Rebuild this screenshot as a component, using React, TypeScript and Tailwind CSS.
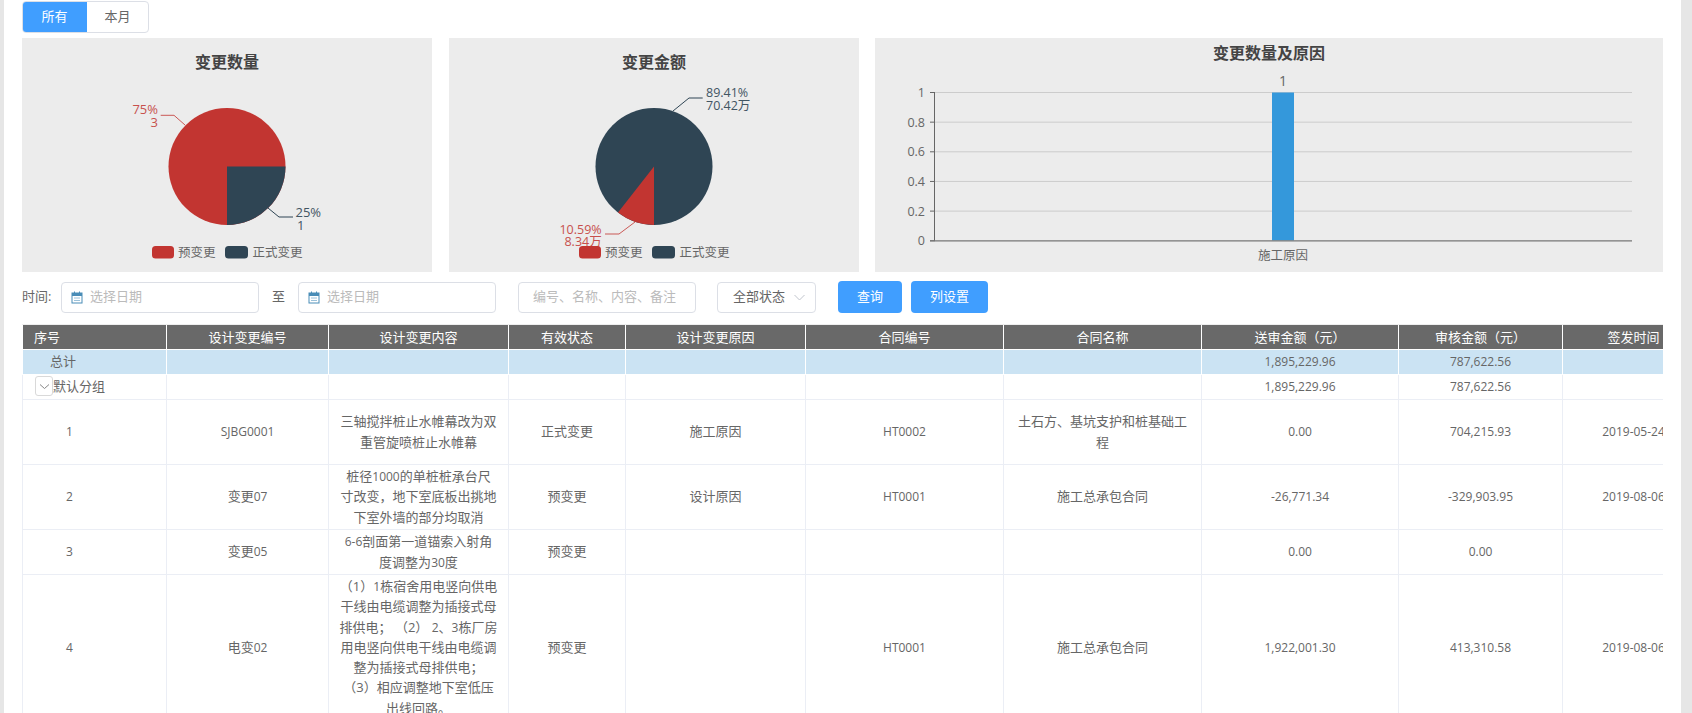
import React from "react";

const RED = "#c23531";
const DARK = "#2f4554";

function L({children}: {children: React.ReactNode}) {
	return <span className="text-xs">{children}</span>;
}

function Legend() {
	return (
		<g fontSize={12.5} fill="#666">
			<rect x={130} y={208} width={22} height={12.5} rx={3.5} fill={RED} />
			<text x={156} y={214.5} dominantBaseline="central">预变更</text>
			<rect x={203} y={208} width={23} height={12.5} rx={3.5} fill={DARK} />
			<text x={230.5} y={214.5} dominantBaseline="central">正式变更</text>
		</g>
	);
}

function ChartTitle({x, y, children}: {x: number; y: number; children: string}) {
	return (
		<text x={x} y={y} textAnchor="middle" dominantBaseline="central" fontSize={16} fontWeight={700} fill="#444">
			{children}
		</text>
	);
}

function PieCountChart() {
	return (
		<svg width={410} height={234} className="block">
			<ChartTitle x={205} y={23.5}>变更数量</ChartTitle>
			<circle cx={205} cy={128.5} r={58.5} fill={RED} />
			<path d="M205 128.5 L263.5 128.5 A58.5 58.5 0 0 1 205 187 Z" fill={DARK} />
			<polyline points="163,87 152,77.3 138.7,77.3" fill="none" stroke={RED} strokeWidth={1} opacity={0.8} />
			<g fontSize={13} fill={RED} opacity={0.85} textAnchor="end">
				<text x={136} y={71} dominantBaseline="central">75%</text>
				<text x={136} y={84} dominantBaseline="central">3</text>
			</g>
			<polyline points="246,170 257,179 271,179" fill="none" stroke={DARK} strokeWidth={1} />
			<g fontSize={13} fill={DARK} opacity={0.9}>
				<text x={273.5} y={174} dominantBaseline="central">25%</text>
				<text x={275} y={187} dominantBaseline="central">1</text>
			</g>
			<Legend />
		</svg>
	);
}

function PieAmountChart() {
	return (
		<svg width={410} height={234} className="block">
			<ChartTitle x={205} y={24}>变更金额</ChartTitle>
			<circle cx={205} cy={128.5} r={58.5} fill={DARK} />
			<path d="M205 128.5 L205 187 A58.5 58.5 0 0 1 169 174.5 Z" fill={RED} />
			<polyline points="224,73 240,60 253.7,60" fill="none" stroke={DARK} strokeWidth={1} />
			<g fontSize={12.5} fill={DARK} opacity={0.9}>
				<text x={257} y={54.3} dominantBaseline="central">89.41%</text>
				<text x={257} y={67} dominantBaseline="central">70.42万</text>
			</g>
			<polyline points="186,184 170,196 156,196" fill="none" stroke={RED} strokeWidth={1} opacity={0.8} />
			<g fontSize={12.5} fill={RED} opacity={0.85} textAnchor="end">
				<text x={152.7} y={191} dominantBaseline="central">10.59%</text>
				<text x={152.7} y={203.7} dominantBaseline="central">8.34万</text>
			</g>
			<Legend />
		</svg>
	);
}

const TICKS = ["1", "0.8", "0.6", "0.4", "0.2", "0"];

function ReasonChart() {
	return (
		<svg width={788} height={234} className="block">
			<ChartTitle x={394} y={15}>变更数量及原因</ChartTitle>
			{TICKS.map((t, i) => {
				const y = 54.5 + i * 29.65;
				return (
					<g key={t}>
						{i < 5 && <line x1={60} x2={757} y1={y} y2={y} stroke="#ccc" />}
						<line x1={55} x2={60} y1={y} y2={y} stroke="#666" />
						<text x={50} y={y} textAnchor="end" dominantBaseline="central" fontSize={12.5} fill="#666">{t}</text>
					</g>
				);
			})}
			<rect x={397} y={54.5} width={22} height={148} fill="#3498db" />
			<line x1={59.5} x2={59.5} y1={54} y2={203} stroke="#666" />
			<line x1={55} x2={757} y1={202.8} y2={202.8} stroke="#777" strokeWidth={1.2} />
			<text x={408} y={42} textAnchor="middle" dominantBaseline="central" fontSize={14} fill="#666">1</text>
			<text x={408} y={217} textAnchor="middle" dominantBaseline="central" fontSize={12.5} fill="#666">施工原因</text>
		</svg>
	);
}

function CalendarIcon() {
	return (
		<svg width={12} height={13} viewBox="0 0 12 13" className="shrink-0">
			<rect x={1} y={2} width={10} height={10} fill="none" stroke="#4a8db7" />
			<rect x={1} y={2} width={10} height={3} fill="#4a8db7" />
			<path d="M3.5 .5v3M8.5 .5v3" stroke="#4a8db7" />
			<path d="M3 7h6M3 9.500h6" stroke="#9cc2da" />
		</svg>
	);
}

function DateInput({className}: {className: string}) {
	return (
		<div className={`flex h-[31px] items-center gap-[7px] rounded border border-[#dcdfe6] bg-white pl-[9px] text-[13px] text-[#bbb] ${className}`}>
			<CalendarIcon />
			选择日期
		</div>
	);
}

const headers = ["序号", "设计变更编号", "设计变更内容", "有效状态", "设计变更原因", "合同编号", "合同名称", "送审金额（元）", "审核金额（元）", "签发时间"];

type Row = {
	no: string;
	code: React.ReactNode;
	content: React.ReactNode;
	status: string;
	reason?: string;
	contract?: string;
	name?: React.ReactNode;
	sent: string;
	audit: string;
	date?: string;
	height: string;
};

const rows: Row[] = [
	{
		no: "1",
		code: <L>SJBG0001</L>,
		content: <>三轴搅拌桩止水帷幕改为双<br />重管旋喷桩止水帷幕</>,
		status: "正式变更",
		reason: "施工原因",
		contract: "HT0002",
		name: <>土石方、基坑支护和桩基础工<br />程</>,
		sent: "0.00",
		audit: "704,215.93",
		date: "2019-05-24",
		height: "h-[65px]",
	},
	{
		no: "2",
		code: <>变更<L>07</L></>,
		content: <>桩径<L>1000</L>的单桩桩承台尺<br />寸改变，地下室底板出挑地<br />下室外墙的部分均取消</>,
		status: "预变更",
		reason: "设计原因",
		contract: "HT0001",
		name: "施工总承包合同",
		sent: "-26,771.34",
		audit: "-329,903.95",
		date: "2019-08-06",
		height: "h-[65px]",
	},
	{
		no: "3",
		code: <>变更<L>05</L></>,
		content: <><L>6-6</L>剖面第一道锚索入射角<br />度调整为<L>30</L>度</>,
		status: "预变更",
		sent: "0.00",
		audit: "0.00",
		height: "h-[45px]",
	},
	{
		no: "4",
		code: <>电变<L>02</L></>,
		content: <>（1）<L>1</L>栋宿舍用电竖向供电<br />干线由电缆调整为插接式母<br />排供电； （2） <L>2</L>、<L>3</L>栋厂房<br />用电竖向供电干线由电缆调<br />整为插接式母排供电；<br />（3）相应调整地下室低压<br />出线回路。</>,
		status: "预变更",
		contract: "HT0001",
		name: "施工总承包合同",
		sent: "1,922,001.30",
		audit: "413,310.58",
		date: "2019-08-06",
		height: "h-[146px]",
	},
];

const td = "border border-[#ebeef5] px-[8px] py-[1.5px] text-center align-middle";

function BodyRow({row}: {row: Row}) {
	return (
		<tr className={row.height}>
			<td className={`${td} !pl-[43px] !text-left`}><L>{row.no}</L></td>
			<td className={td}>{row.code}</td>
			<td className={td}>{row.content}</td>
			<td className={td}>{row.status}</td>
			<td className={td}>{row.reason}</td>
			<td className={td}><L>{row.contract}</L></td>
			<td className={td}>{row.name}</td>
			<td className={td}><L>{row.sent}</L></td>
			<td className={td}><L>{row.audit}</L></td>
			<td className={td}><L>{row.date}</L></td>
		</tr>
	);
}

function DataTable() {
	return (
		<div className="mt-[11px] overflow-hidden border-t border-[#eee]">
			<table className="w-[1682px] table-fixed border-collapse text-[13px] leading-[20.2px] text-[#666]">
				<colgroup>
					<col className="w-[144px]" />
					<col className="w-[162px]" />
					<col className="w-[180px]" />
					<col className="w-[117px]" />
					<col className="w-[180px]" />
					<col className="w-[198px]" />
					<col className="w-[198px]" />
					<col className="w-[197px]" />
					<col className="w-[164px]" />
					<col className="w-[142px]" />
				</colgroup>
				<thead>
					<tr className="h-[24px] bg-[#696969] text-white">
						{headers.map((h, i) => (
							<th key={h} className={`border-x border-white px-[8px] py-0 font-normal ${i === 0 ? "pl-[11px] text-left" : "text-center"}`}>
								{h}
							</th>
						))}
					</tr>
				</thead>
				<tbody>
					<tr className="h-[25px] bg-[#cbe3f3]">
						<td className={`${td} !border-white !pl-[27px] !text-left`}>总计</td>
						{Array.from({length: 6}, (_, i) => <td key={i} className={`${td} !border-white`} />)}
						<td className={`${td} !border-white`}><L>1,895,229.96</L></td>
						<td className={`${td} !border-white`}><L>787,622.56</L></td>
						<td className={`${td} !border-white`} />
					</tr>
					<tr className="h-[25px]">
						<td className={`${td} !py-0 !pl-[12px] !text-left`}>
							<div className="flex items-center">
								<span className="flex h-[20px] w-[18px] items-center justify-center rounded-[3px] border border-[#d9d9d9]">
									<svg width={11} height={7} viewBox="0 0 11 7">
										<path d="M1 1.500l4.500 4 4.500-4" fill="none" stroke="#888" />
									</svg>
								</span>
								<span>默认分组</span>
							</div>
						</td>
						{Array.from({length: 6}, (_, i) => <td key={i} className={td} />)}
						<td className={td}><L>1,895,229.96</L></td>
						<td className={td}><L>787,622.56</L></td>
						<td className={td} />
					</tr>
					{rows.map(row => <BodyRow key={row.no} row={row} />)}
				</tbody>
			</table>
		</div>
	);
}

export default function App() {
	return (
		<div className="flex h-[713px] overflow-hidden bg-[#e6e6e6] font-['Open_Sans','Noto_Sans_CJK_SC',sans-serif]">
			<div className="ml-[4px] w-[1677px] overflow-hidden bg-white px-[18px] pt-px">
				<div className="flex h-[32px] w-[127px] overflow-hidden rounded border border-[#dcdfe6] text-[13px]">
					<div className="-my-px -ml-px flex w-[65px] items-center justify-center bg-[#409eff] text-white">所有</div>
					<div className="flex flex-1 items-center justify-center text-[#666]">本月</div>
				</div>

				<div className="mt-[5px] flex">
					<div className="h-[234px] w-[410px] bg-[#ececec]"><PieCountChart /></div>
					<div className="ml-[17px] h-[234px] w-[410px] bg-[#ececec]"><PieAmountChart /></div>
					<div className="ml-[16px] h-[234px] w-[788px] bg-[#ececec]"><ReasonChart /></div>
				</div>

				<div className="mt-[9px] flex items-center text-[13px] text-[#666]">
					<span className="w-[39px]">时间:</span>
					<DateInput className="w-[198px]" />
					<span className="w-[39px] text-center">至</span>
					<DateInput className="w-[198px]" />
					<div className="ml-[22px] flex h-[31px] w-[178px] items-center rounded border border-[#dcdfe6] pl-[14px] text-[#bbb]">编号、名称、内容、备注</div>
					<div className="ml-[21px] flex h-[31px] w-[99px] items-center justify-between rounded border border-[#dcdfe6] pl-[15px] pr-[10px]">
						全部状态
						<svg width={11} height={7} viewBox="0 0 11 7">
							<path d="M.5 1l5 5 5-5" fill="none" stroke="#c0c4cc" />
						</svg>
					</div>
					<button className="ml-[22px] h-[32px] w-[64px] rounded bg-[#409eff] text-white">查询</button>
					<button className="ml-[9px] h-[32px] w-[77px] rounded bg-[#409eff] text-white">列设置</button>
				</div>

				<DataTable />
			</div>
		</div>
	);
}
